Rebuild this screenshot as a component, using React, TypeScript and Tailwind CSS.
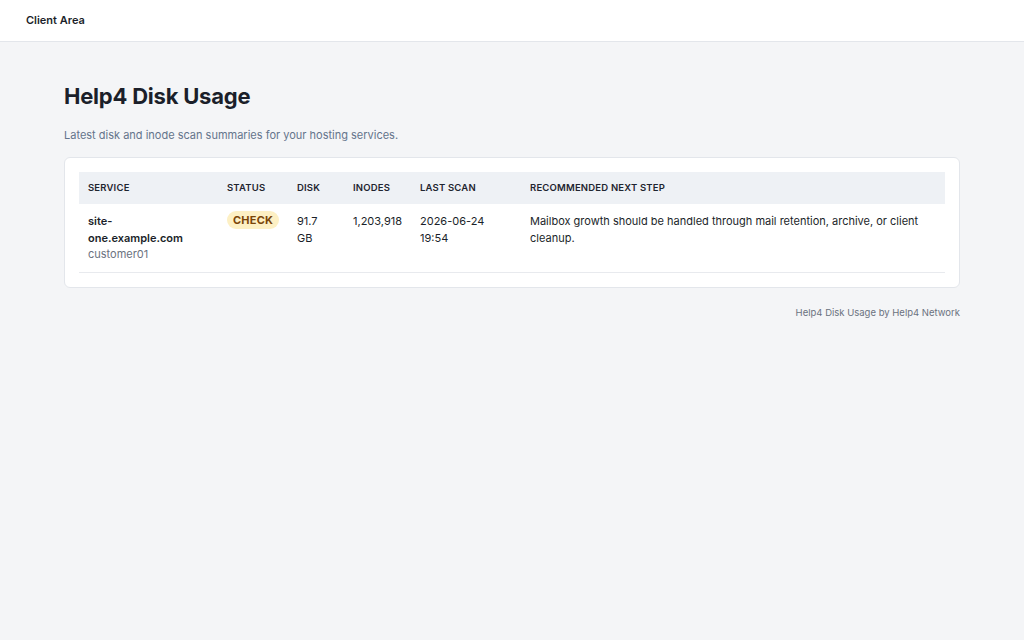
const rows = [
  {
    service: 'site-one.example.com',
    user: 'customer01',
    status: 'CHECK',
    disk: '91.7 GB',
    inodes: '1,203,918',
    lastScan: '2026-06-24 19:54',
    step: 'Mailbox growth should be handled through mail retention, archive, or client cleanup.',
  },
];

export default function App() {
  return (
    <div className="min-h-[640px] bg-[#f4f5f7] font-['Inter',sans-serif] text-[#1b1f2a]">
      <header className="h-[42px] bg-white border-b border-[#e3e6eb] flex items-center px-[26px]">
        <span className="text-[11px] font-semibold">Client Area</span>
      </header>

      <main className="px-16 pt-[40px]">
        <h1 className="text-[22px] font-bold leading-[28px] tracking-[-0.01em]">Help4 Disk Usage</h1>
        <p className="mt-[18px] text-[11px] leading-[15px] text-[#64748b]">
          Latest disk and inode scan summaries for your hosting services.
        </p>

        <div className="mt-[14px] bg-white border border-[#e3e6eb] rounded-[6px] p-[14px]">
          <table className="w-full table-fixed border-collapse text-left">
            <colgroup>
              <col className="w-[139px]" />
              <col className="w-[70px]" />
              <col className="w-[56px]" />
              <col className="w-[67px]" />
              <col className="w-[110px]" />
              <col />
            </colgroup>
            <thead>
              <tr className="bg-[#eef1f5]">
                {['Service', 'Status', 'Disk', 'Inodes', 'Last scan', 'Recommended next step'].map((h) => (
                  <th
                    key={h}
                    className="px-[9px] py-[9px] text-[9.5px] leading-[14px] font-semibold uppercase tracking-[0.02em] text-[#1f2530]"
                  >
                    {h}
                  </th>
                ))}
              </tr>
            </thead>
            <tbody>
              {rows.map((r) => (
                <tr key={r.service} className="border-b border-[#e8eaee] align-top text-[11px] leading-[16.5px]">
                  <td className="px-[9px] py-[9px]">
                    <div className="font-semibold">site-<br />one.example.com</div>
                    <div className="text-[#6b7280]">{r.user}</div>
                  </td>
                  <td className="px-[9px] py-[7px]">
                    <span className="inline-block rounded-full bg-[#fdf0c4] px-[6px] py-[1px] text-[11px] leading-[16px] font-bold tracking-[0.02em] text-[#7a4508]">
                      {r.status}
                    </span>
                  </td>
                  <td className="px-[9px] py-[9px]">
                    91.7<br />GB
                  </td>
                  <td className="px-[9px] py-[9px]">{r.inodes}</td>
                  <td className="px-[9px] py-[9px]">
                    2026-06-24<br />19:54
                  </td>
                  <td className="px-[9px] py-[9px]">{r.step}</td>
                </tr>
              ))}
            </tbody>
          </table>
        </div>

        <p className="mt-[18px] text-right text-[9.5px] leading-[14px] text-[#6b7280]">
          Help4 Disk Usage by Help4 Network
        </p>
      </main>
    </div>
  );
}
